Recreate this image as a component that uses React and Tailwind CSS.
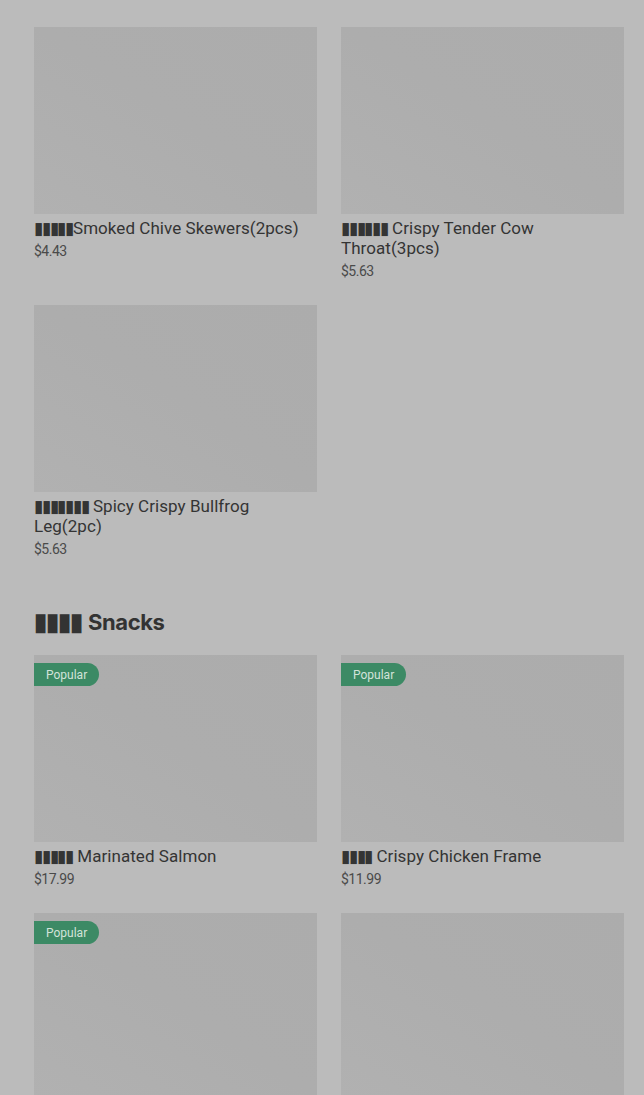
import React from 'react';

const T = '\u25AE';

const beforeSnacks = [
  { tofu: 5, name: 'Smoked Chive Skewers(2pcs)', gap: false, price: '$4.43' },
  { tofu: 6, name: 'Crispy Tender Cow Throat(3pcs)', gap: true, price: '$5.63' },
  { tofu: 7, name: 'Spicy Crispy Bullfrog Leg(2pc)', gap: true, price: '$5.63' },
];

const snacks = [
  { tofu: 5, name: 'Marinated Salmon', gap: true, price: '$17.99', popular: true },
  { tofu: 4, name: 'Crispy Chicken Frame', gap: true, price: '$11.99', popular: true },
  { tofu: 3, name: 'Spicy Duck Neck', gap: true, price: '$8.99', popular: true },
  { tofu: 4, name: 'Sweet Potato Fries', gap: true, price: '$6.99', popular: false },
];

function Card({ item }) {
  return (
    <div className="flex flex-col">
      <div className="relative h-[187px] w-full bg-gradient-to-tr from-[#b1b1b1] via-[#adadad] to-[#acacac]">
        {item.popular && (
          <span className="absolute left-0 top-2 flex h-[23px] items-center rounded-r-full bg-[#3c8a65] pl-3 pr-[12px] text-[12px] text-[#d3e3da]">
            Popular
          </span>
        )}
      </div>
      <div className="mt-1 pr-4 text-[17px] leading-5 tracking-[0.05px] text-[#343434]">
        <span className="text-[17px] tracking-[-1.2px]">{T.repeat(item.tofu)}</span>
        {item.gap ? ' ' : ''}
        {item.name}
      </div>
      <div className="mt-1 text-[14px] leading-[18px] tracking-[-0.5px] text-[#4a4a4a]">{item.price}</div>
    </div>
  );
}

export default function App() {
  return (
    <div className="min-h-[1095px] bg-[#bbbbbb] pl-[34px] pr-[20px] pt-[27px] font-['Roboto',sans-serif]">
      <div className="grid grid-cols-2 gap-x-6 gap-y-[25px]">
        {beforeSnacks.map((item, i) => (
          <Card key={i} item={item} />
        ))}
      </div>

      <h2 className="mt-[50px] mb-[19px] flex items-center text-[22px] font-bold leading-7 text-[#333333] font-['Inter',sans-serif]">
        <span className="text-[24px] tracking-[-1px]">{T.repeat(4)}</span>
        <span className="ml-[6px] tracking-[-0.4px]">Snacks</span>
      </h2>

      <div className="grid grid-cols-2 gap-x-6 gap-y-[25px]">
        {snacks.map((item, i) => (
          <Card key={i} item={item} />
        ))}
      </div>
    </div>
  );
}
